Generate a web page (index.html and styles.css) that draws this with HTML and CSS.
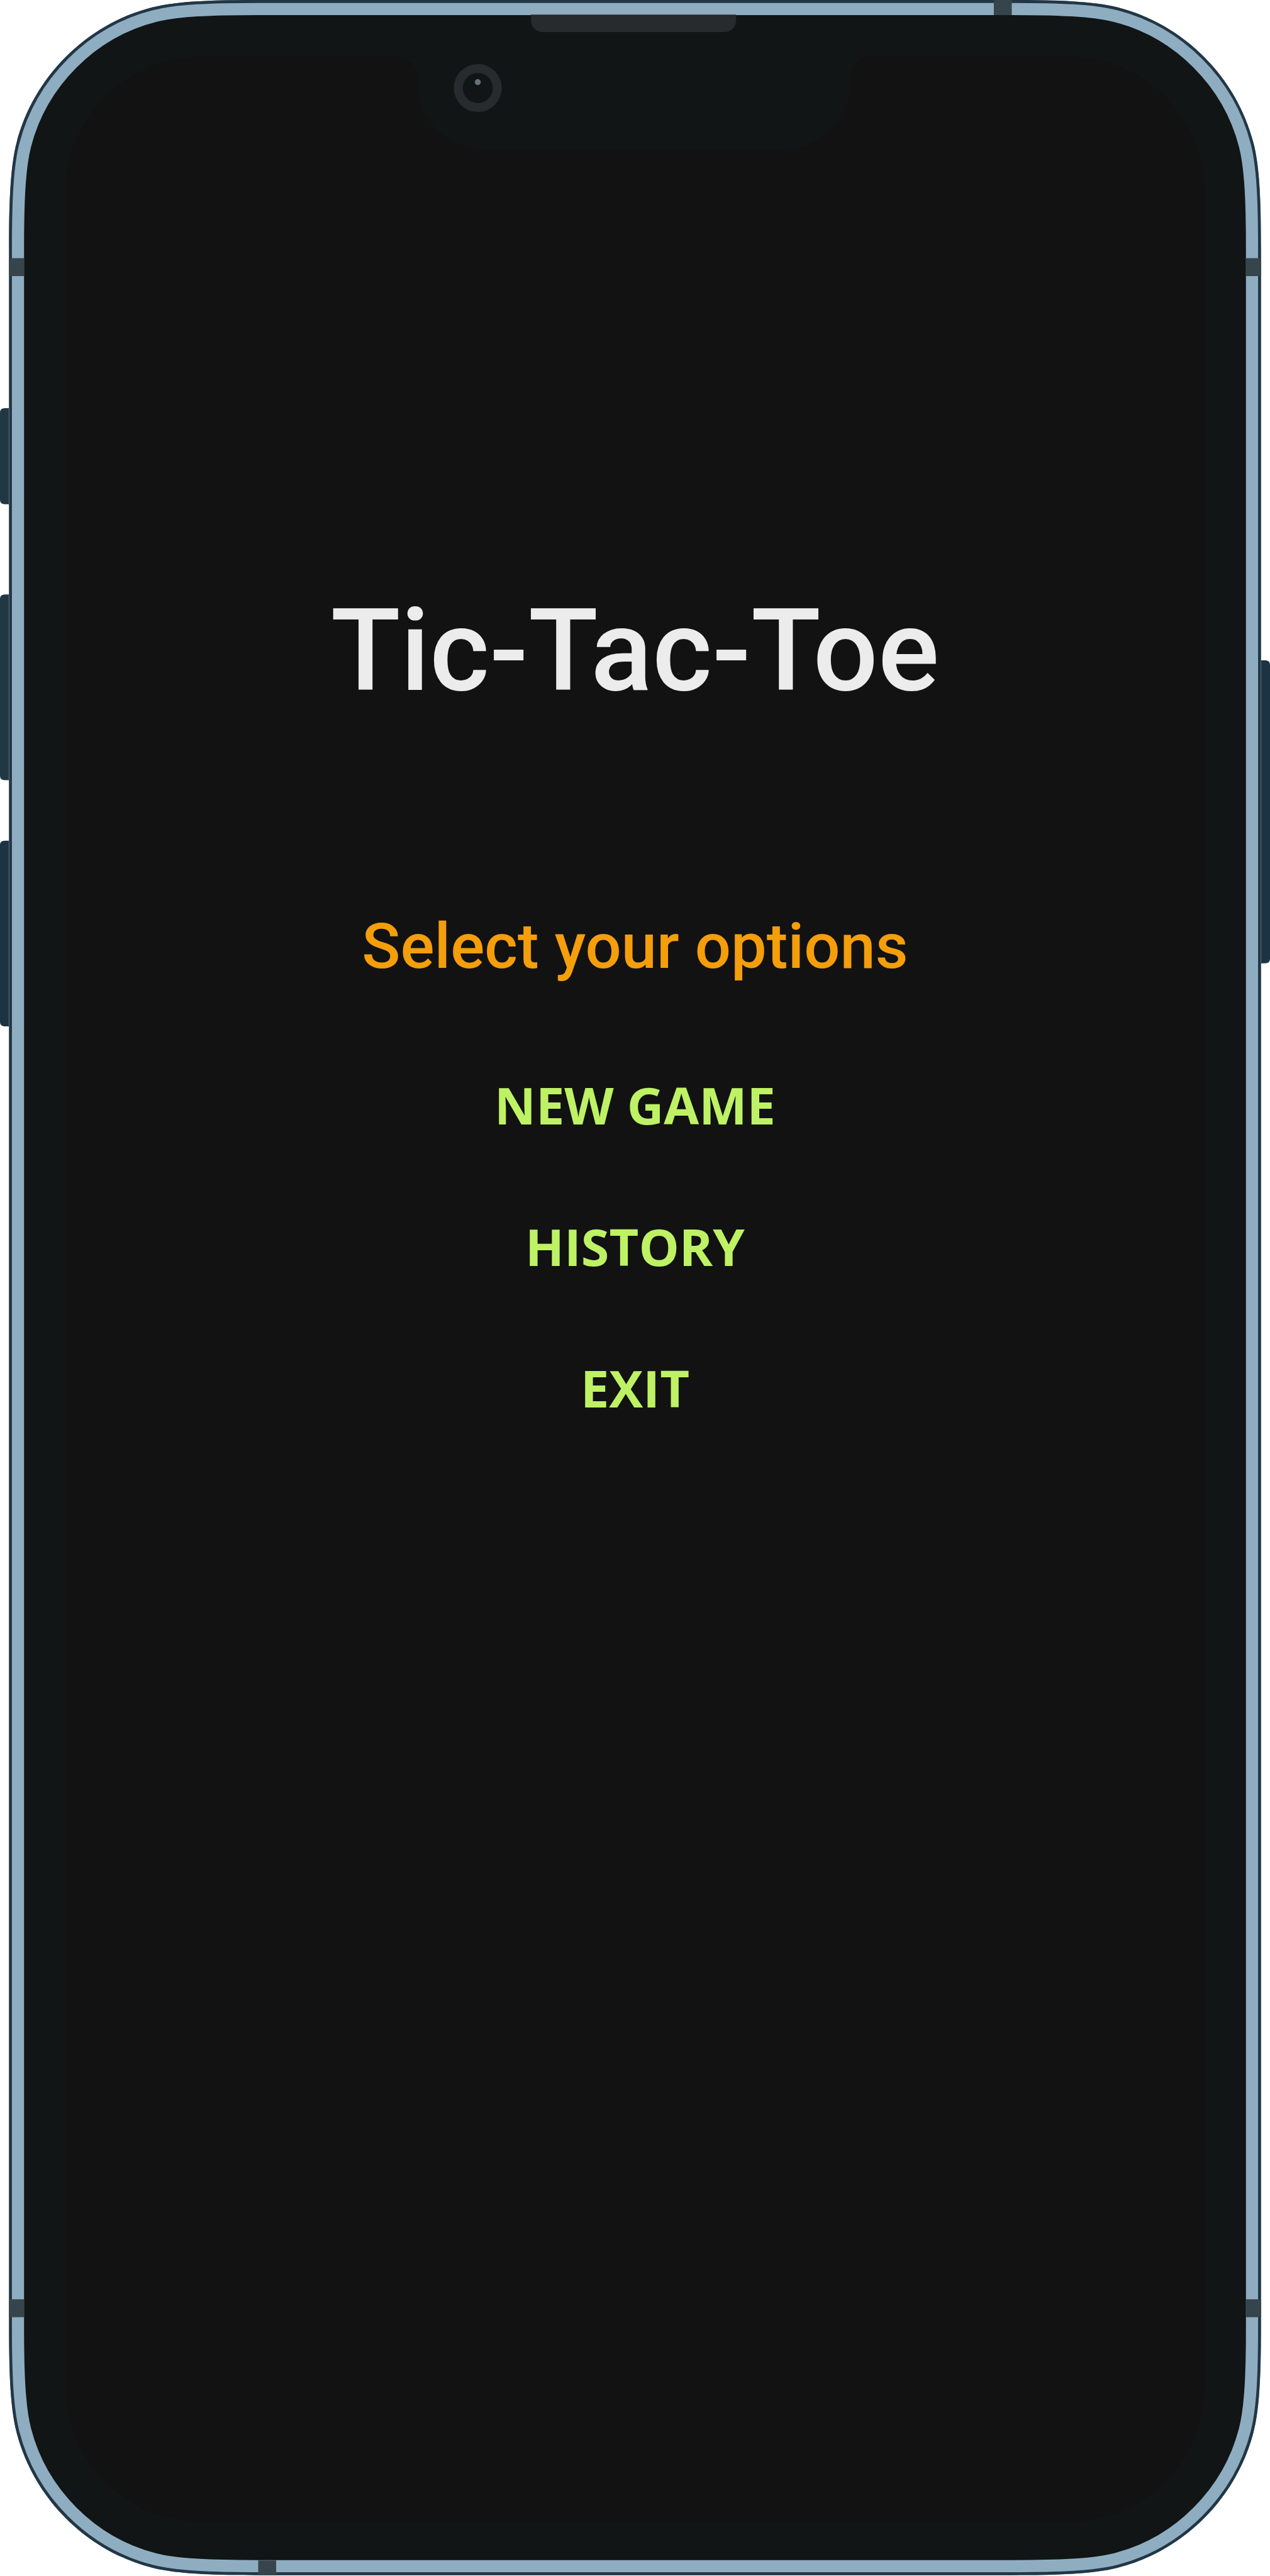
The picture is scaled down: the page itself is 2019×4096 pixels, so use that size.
FILE: index.html
```html
<!DOCTYPE html>
<html lang="en">
<head>
<meta charset="utf-8">
<meta name="viewport" content="width=device-width, initial-scale=1">
<title>Tic-Tac-Toe</title>
<link rel="stylesheet" href="styles.css">
</head>
<body>
<div class="phone">
  <svg class="phone-frame" viewBox="0 0 2619 5313" aria-hidden="true">
    <defs>
      <path id="body-shape" d="M18.6 514C18.6 420 21 345 34 295C69 159 178 50 313.6 15.4C363.6 2.4 438.6 0 532.6 0H2086.4C2180.4 0 2255.4 2.4 2305.4 15.4C2441 50 2550 159 2585 295C2598 345 2600.4 420 2600.4 514V4797.5C2600.4 4891.5 2598 4966.5 2585 5016.5C2550 5152.5 2441 5261.5 2305.4 5296.1C2255.4 5309.1 2180.4 5311.5 2086.4 5311.5H532.6C438.6 5311.5 363.6 5309.1 313.6 5296.1C178 5261.5 69 5152.5 34 5016.5C21 4966.5 18.6 4891.5 18.6 4797.5Z"/>
      <clipPath id="body-clip"><use href="#body-shape"/></clipPath>
    </defs>
    <!-- side buttons -->
    <path fill="#223744" d="M19 842H10Q0 842 0 851V1031Q0 1040 10 1040H19ZM19 1226H10Q0 1226 0 1235V1600Q0 1609 10 1609H19Z"/>
    <path fill="#1c3344" d="M19 1734H10Q0 1734 0 1743V2108Q0 2117 10 2117H19ZM2600 1362H2609Q2619 1362 2619 1371V1978Q2619 1987 2609 1987H2600Z"/>
    <!-- body, rim and bezel -->
    <g clip-path="url(#body-clip)">
      <use href="#body-shape" fill="#111515" stroke="#8fadc1" stroke-width="62"/>
      <use href="#body-shape" fill="none" stroke="#223746" stroke-width="12"/>
    </g>
    <path fill="none" stroke="#66747c" stroke-width="1" d="M18.5 843V1039M18.5 1227V1608M18.5 1735V2116M2600.5 1364V1985"/>
    <!-- antenna bands -->
    <path fill="#36454c" d="M18.6 532.5h31v37h-31zM2569.4 532.5h31.4v37h-31.4zM18.6 4742.5h31v37h-31zM2569.4 4742.5h31.4v37h-31.4zM2049.5 0h37v31h-37zM532.5 5281h37v31h-37z"/>
    <!-- display and notch -->
    <rect x="135" y="117" width="2349" height="5084" rx="280" fill="#121212"/>
    <path fill="#111515" d="M817 116V117A43.500 44 0 0 1 860.500 161V171A137 137 0 0 0 997.500 308H1616A137 137 0 0 0 1753 171V161A44 44 0 0 1 1797 117V116Z"/>
    <path fill="#272b2e" d="M1095 30H1518V42A24 24 0 0 1 1494 66H1119A24 24 0 0 1 1095 42Z"/>
    <circle cx="985.300" cy="181.500" r="49.500" fill="#272b2e"/>
    <circle cx="985.300" cy="181.500" r="31" fill="#111515"/>
    <circle cx="985.300" cy="169.300" r="6.200" fill="#657277"/>
  </svg>
  <main class="screen">
    <h1 class="title">Tic-Tac-Toe</h1>
    <p class="prompt">Select your options</p>
    <nav class="menu" aria-label="Game options">
      <button class="menu-item" type="button">NEW GAME</button>
      <button class="menu-item" type="button">HISTORY</button>
      <button class="menu-item" type="button">EXIT</button>
    </nav>
  </main>
</div>
</body>
</html>
```
FILE: styles.css
```css
* {
  box-sizing: border-box;
}

body {
  margin: 0;
  background: #ffffff;
}

/* The frame and the screen content share one grid cell. */
.phone {
  display: grid;
  grid-template-columns: minmax(0, 1fr);
}

.phone-frame,
.screen {
  grid-area: 1 / 1;
}

.phone-frame {
  display: block;
  width: 100%;
  height: auto;
}

.screen {
  display: flex;
  flex-direction: column;
  align-items: center;
  padding-top: 935px;
  font-family: Roboto, "Liberation Sans", sans-serif;
  text-align: center;
}

.title {
  margin: 0;
  color: #ececec;
  font-size: 182px;
  font-weight: 500;
  line-height: 200px;
}

.prompt {
  margin: 310px 0 0;
  color: #f59e0b;
  font-size: 101px;
  font-weight: 500;
  line-height: 120px;
}

.menu {
  display: flex;
  flex-direction: column;
  align-items: center;
  gap: 120px;
  margin-top: 139px;
}

.menu-item {
  padding: 0;
  border: 0;
  background: none;
  color: #bef264;
  font-family: "Open Sans", "Noto Sans", sans-serif;
  font-size: 81px;
  font-weight: 700;
  line-height: 105px;
  cursor: pointer;
}
```
